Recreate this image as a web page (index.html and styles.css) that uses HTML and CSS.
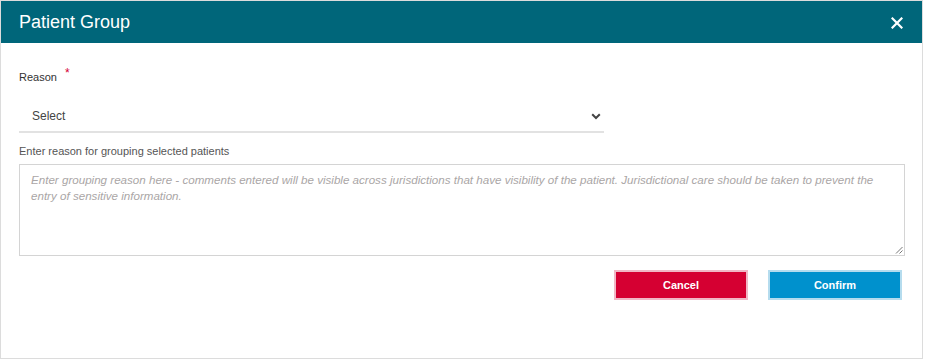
FILE: index.html
```html
<!DOCTYPE html>
<html lang="en">
  <head>
    <meta charset="UTF-8" />
    <meta name="viewport" content="width=device-width, initial-scale=1.0" />
    <title>Patient Group</title>
    <link rel="stylesheet" href="styles.css">
  </head>
  <body>
    <div class="dialog">
      <div class="dialog-header">
        <div class="dialog-title">Patient Group</div>
        <div class="close">
          <svg width="12" height="12" viewBox="0 0 12 12">
            <path d="M1.5 1.5 L10.5 10.5 M10.5 1.5 L1.5 10.5" stroke="#fff" stroke-width="2.2" stroke-linecap="square" fill="none"/>
          </svg>
        </div>
      </div>
      <div class="dialog-body">
        <div class="label">Reason <span class="required">*</span></div>
        <div class="select">
          <span>Select</span>
          <svg width="10" height="7" viewBox="0 0 10 7">
            <path d="M1.2 1.2 L5 5 L8.8 1.2" stroke="#444" stroke-width="2" fill="none"/>
          </svg>
        </div>
        <div class="label comment-label">Enter reason for grouping selected patients</div>
        <div class="textarea">
          <div class="placeholder">Enter grouping reason here - comments entered will be visible across jurisdictions that have visibility of the patient. Jurisdictional care should be taken to prevent the entry of sensitive information.</div>
          <svg class="grip" width="8" height="8" viewBox="0 0 8 8">
            <path d="M7.5 1 L1 7.5 M7.5 4.5 L4.5 7.5" stroke="#777" stroke-width="1" fill="none"/>
          </svg>
        </div>
        <div class="actions">
          <div class="btn cancel">Cancel</div>
          <div class="btn confirm">Confirm</div>
        </div>
      </div>
    </div>
  </body>
</html>
```

FILE: styles.css
```css
body {
  margin: 0;
  background-color: #fff;
  font-family: "Liberation Sans", Arial, sans-serif;
}
.dialog {
  width: 921px;
  height: 357px;
  border: 1px solid #dcdcdc;
  background-color: #fff;
}
.dialog-header {
  height: 42px;
  background-color: #00667a;
  display: flex;
  justify-content: space-between;
  align-items: center;
  padding: 0 18px;
}
.dialog-title {
  color: #fff;
  font-size: 18px;
  padding-top: 1px;
}
.close {
  display: flex;
  margin-right: 1px;
  padding-top: 1px;
}
.dialog-body {
  padding: 27px 17px 0 18px;
}
.label {
  font-size: 11px;
  color: #333;
  height: 13px;
}
.required {
  color: #d50032;
  position: relative;
  top: -4px;
  margin-left: 5px;
  font-size: 12px;
}
.select {
  width: 569px;
  height: 30px;
  margin-top: 18px;
  padding: 0 3px 0 13px;
  display: flex;
  justify-content: space-between;
  align-items: center;
  border-bottom: 2px solid #e2e2e2;
  font-size: 12px;
  color: #444;
}
.comment-label {
  margin-top: 12px;
  color: #555;
}
.textarea {
  position: relative;
  height: 92px;
  margin-top: 6px;
  border: 1px solid #d4d4d4;
  padding: 7px 11px 0 11px;
  box-sizing: border-box;
}
.placeholder {
  font-size: 11.6px;
  font-style: italic;
  color: #aaa6a6;
  line-height: 16px;
}
.grip {
  position: absolute;
  right: 1px;
  bottom: 1px;
}
.actions {
  display: flex;
  justify-content: flex-end;
  gap: 20px;
  margin-top: 14px;
  padding-right: 3px;
}
.btn {
  width: 130px;
  height: 26px;
  display: flex;
  justify-content: center;
  align-items: center;
  font-size: 11px;
  font-weight: bold;
  color: #fff;
  cursor: pointer;
}
.cancel {
  background-color: #d50032;
  border: 2px solid #f0b8c6;
}
.confirm {
  background-color: #0091cd;
  border: 2px solid #b5dcee;
}
```
